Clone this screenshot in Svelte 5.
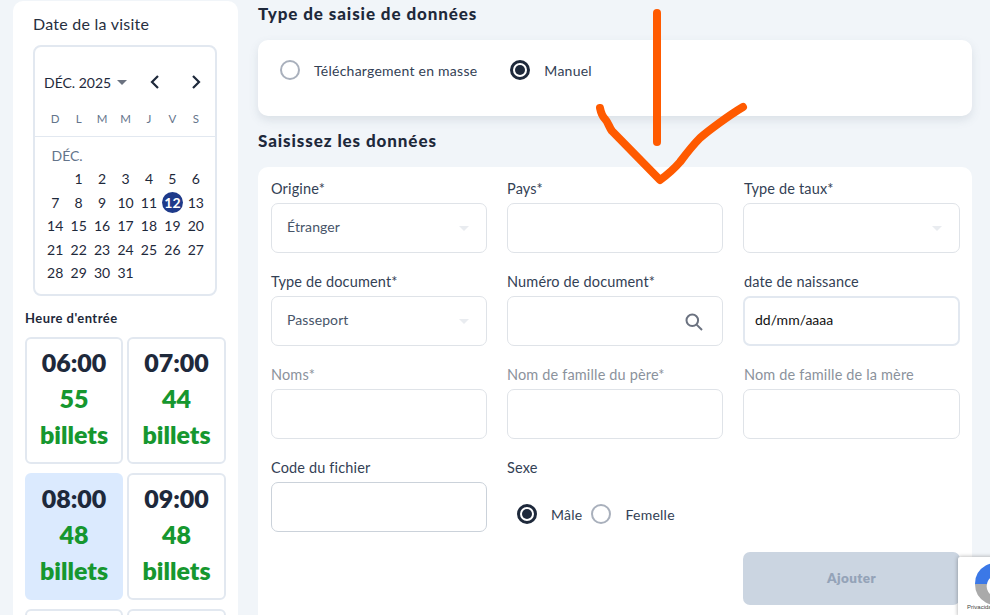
<script>
  const weekdays = ['D', 'L', 'M', 'M', 'J', 'V', 'S'];
  const days = ['', ...Array.from({ length: 31 }, (_, i) => i + 1)];
  const slots = [
    { time: '06:00', count: 55 },
    { time: '07:00', count: 44 },
    { time: '08:00', count: 48, active: true },
    { time: '09:00', count: 48 }
  ];
</script>

<div class="page">
  <aside class="side">
    <h3 class="side-title">Date de la visite</h3>
    <div class="cal">
      <div class="cal-head">
        <span class="month">DÉC. 2025</span>
        <span class="caret"></span>
        <svg class="nav prev" width="12" height="16" viewBox="0 0 12 16"><path d="M9 2 3 8l6 6" /></svg>
        <svg class="nav next" width="12" height="16" viewBox="0 0 12 16"><path d="m3 2 6 6-6 6" /></svg>
      </div>
      <div class="week">
        {#each weekdays as w}<span>{w}</span>{/each}
      </div>
      <div class="cal-body">
        <div class="cal-month">DÉC.</div>
        <div class="days">
          {#each days as d}
            <span class:today={d === 12}>{d}</span>
          {/each}
        </div>
      </div>
    </div>
    <h4 class="hour-title">Heure d'entrée</h4>
    <div class="slots">
      {#each slots as s}
        <div class="slot" class:active={s.active}>
          <div class="time">{s.time}</div>
          <div class="count">{s.count}<br />billets</div>
        </div>
      {/each}
      <div class="slot"></div>
      <div class="slot"></div>
    </div>
  </aside>

  <main class="main">
    <h2 class="head first">Type de saisie de données</h2>
    <section class="card type">
      <label class="radio"><span class="dot"></span>Téléchargement en masse</label>
      <label class="radio"><span class="dot on"></span>Manuel</label>
    </section>
    <h2 class="head second">Saisissez les données</h2>
    <section class="card form">
      <div class="grid">
        <div class="field">
          <span class="lab">Origine*</span>
          <div class="input select"><span class="val">Étranger</span><span class="tri"></span></div>
        </div>
        <div class="field">
          <span class="lab">Pays*</span>
          <div class="input"></div>
        </div>
        <div class="field">
          <span class="lab">Type de taux*</span>
          <div class="input select"><span class="tri"></span></div>
        </div>

        <div class="field">
          <span class="lab">Type de document*</span>
          <div class="input select"><span class="val">Passeport</span><span class="tri"></span></div>
        </div>
        <div class="field">
          <span class="lab">Numéro de document*</span>
          <div class="input search">
            <svg width="20" height="20" viewBox="0 0 20 20"><circle cx="8.3" cy="8.3" r="5.8" /><path d="m12.6 12.6 5.4 5.4" /></svg>
          </div>
        </div>
        <div class="field">
          <span class="lab">date de naissance</span>
          <div class="input date"><span class="date-val">dd/mm/aaaa</span></div>
        </div>

        <div class="field">
          <span class="lab muted">Noms*</span>
          <div class="input"></div>
        </div>
        <div class="field">
          <span class="lab muted">Nom de famille du père*</span>
          <div class="input"></div>
        </div>
        <div class="field">
          <span class="lab muted">Nom de famille de la mère</span>
          <div class="input"></div>
        </div>

        <div class="field">
          <span class="lab">Code du fichier</span>
          <div class="input strong"></div>
        </div>
        <div class="field">
          <span class="lab">Sexe</span>
          <div class="sex">
            <label class="radio"><span class="dot on"></span>Mâle</label>
            <label class="radio"><span class="dot"></span>Femelle</label>
          </div>
        </div>
      </div>
      <div class="actions"><button class="add">Ajouter</button></div>
    </section>
  </main>

  <svg class="arrow" width="990" height="200" viewBox="0 0 990 200">
    <path d="M657 13V142" />
    <path d="M600 108c1 5 2 8 5 11s4 8 7 12l48 49c7-5 14-11 20-18 6-8 12-16 20-24 8-7 28-22 43-31" />
  </svg>

  <div class="recaptcha">
    <svg width="32" height="42" viewBox="0 0 32 42">
      <path class="rb" d="M0 21 A21 21 0 0 1 32 3 V21 H21 L25 14 A9 9 0 0 0 12 21 H0 Z" />
      <path class="rg" d="M0 21 H12 A9 9 0 0 0 32 26 V39 A21 21 0 0 1 0 21 Z" />
    </svg>
    <span class="priv">Privacidad</span>
  </div>
</div>

<style>
  :global(body) { margin: 0; background: #f1f5f9; }
  .page {
    position: relative;
    width: 990px;
    height: 615px;
    overflow: hidden;
    display: flex;
    align-items: flex-start;
    background: #f1f5f9;
    font-family: Lato, "Open Sans", sans-serif;
    color: #1e293b;
  }
  .side {
    width: 225px;
    height: 700px;
    margin: 1px 0 0 13px;
    padding: 13px 12px 0;
    box-sizing: border-box;
    background: #fff;
    border-radius: 10px 10px 0 0;
    flex: none;
  }
  .side-title {
    margin: 0 0 11px 8px;
    font: 400 16px/20px Lato, sans-serif;
    letter-spacing: .25px;
    color: #27303f;
  }
  .cal {
    margin-left: 8px;
    width: 184px;
    height: 251px;
    box-sizing: border-box;
    border: 2px solid #e2e8f0;
    border-radius: 8px;
  }
  .cal-head {
    position: relative;
    height: 24px;
    margin-top: 23px;
    padding-left: 9px;
    display: flex;
    align-items: center;
  }
  .month { font-size: 14px; color: #1e293b; }
  .caret {
    margin-left: 6px;
    border: 5px solid transparent;
    border-top: 5px solid #6b7280;
    border-bottom: 0;
  }
  .nav { position: absolute; top: 4px; fill: none; stroke: #1e293b; stroke-width: 2.2; }
  .prev { left: 114px; }
  .next { left: 155px; }
  .week {
    display: grid;
    grid-template-columns: repeat(7, 23.45px);
    padding: 11px 8.5px 0;
    height: 29px;
    box-sizing: border-box;
    margin-top: 14px;
    border-bottom: 1px solid #e2e8f0;
    text-align: center;
    font-size: 11.5px;
    color: #64748b;
    align-items: start;
    line-height: 0;
  }
  .cal-body { padding: 10px 8.5px 0; }
  .cal-month { font-size: 14px; line-height: 17px; color: #64748b; padding-left: 8px; }
  .days {
    display: grid;
    grid-template-columns: repeat(7, 23.45px);
    grid-auto-rows: 23.5px;
    margin-top: 3px;
    text-align: center;
    font-size: 14px;
    line-height: 23.5px;
    color: #1e293b;
  }
  .days .today {
    justify-self: center;
    width: 21px;
    height: 21px;
    margin-top: 1px;
    line-height: 21px;
    border-radius: 50%;
    background: #1e3a8a;
    color: #fff;
    font-weight: 700;
  }
  .hour-title {
    margin: 14px 0 11px;
    font: 700 13px/16px Lato, sans-serif;
    letter-spacing: .45px;
    color: #1e293b;
  }
  .slots { display: grid; grid-template-columns: 98px 99px; gap: 9px 4px; }
  .slot {
    height: 127px;
    box-sizing: border-box;
    border: 2px solid #e2e8f0;
    border-radius: 6px;
    text-align: center;
    padding-top: 5px;
    font-weight: 800;
    font-size: 25px;
    line-height: 36px;
  }
  .slot.active { background: #dbeafe; border-color: #dbeafe; }
  .time { color: #1e293b; }
  .count { color: #16972f; }
  .main { width: 714px; margin-left: 20px; flex: none; }
  .head {
    margin: 0;
    font: 900 17px/20px Lato, sans-serif;
    letter-spacing: .9px;
    color: #1e293b;
  }
  .first { margin-top: 4px; }
  .second { margin-top: 15px; }
  .card { background: #fff; border-radius: 10px; }
  .type {
    margin-top: 16px;
    height: 76px;
    padding: 0 0 16px 22px;
    box-sizing: border-box;
    display: flex;
    align-items: center;
    gap: 33px;
    box-shadow: 0 4px 10px rgba(100, 116, 139, .16);
  }
  .radio {
    display: flex;
    align-items: center;
    gap: 14px;
    font-size: 14px;
    letter-spacing: .25px;
    color: #334155;
  }
  .dot {
    width: 20px;
    height: 20px;
    box-sizing: border-box;
    border: 2px solid #a9b0bc;
    border-radius: 50%;
    position: relative;
  }
  .dot.on { border: 3px solid #1e293b; }
  .dot.on::after {
    content: "";
    position: absolute;
    inset: 2px;
    background: #1e293b;
    border-radius: 50%;
  }
  .form { margin-top: 16px; height: 520px; padding: 13px 0 0 13px; box-sizing: border-box; }
  .grid {
    display: grid;
    grid-template-columns: 216px 216px 217px;
    column-gap: 20px;
    row-gap: 20px;
  }
  .lab {
    display: block;
    height: 18px;
    margin-bottom: 5px;
    font-size: 14.5px;
    line-height: 18px;
    letter-spacing: .15px;
    color: #334155;
  }
  .field:nth-child(3n) .lab { padding-left: 1px; }
  .lab.muted { color: #8b929c; }
  .input {
    height: 50px;
    box-sizing: border-box;
    border: 1px solid #dfe3e8;
    border-radius: 7px;
    display: flex;
    align-items: center;
    position: relative;
    background: #fff;
  }
  .input.strong { border-color: #cbd2da; }
  .val { padding: 0 0 3px 15px; font-size: 14px; letter-spacing: .1px; color: #475569; }
  .tri {
    position: absolute;
    right: 17px;
    top: 22px;
    border: 5px solid transparent;
    border-top: 5px solid #e9ecf0;
    border-bottom: 0;
  }
  .search svg {
    position: absolute;
    right: 18px;
    top: 15px;
    fill: none;
    stroke: #6b7280;
    stroke-width: 2;
  }
  .date { border: 2px solid #e2e8f0; padding: 0 0 3px 10px; }
  .date-val { font-size: 14px; color: #111; }
  .sex { display: flex; height: 50px; align-items: center; padding: 14px 0 0 10px; gap: 9px; box-sizing: border-box; }
  .actions { display: flex; justify-content: flex-start; margin: 20px 0 0 472px; }
  .add {
    width: 217px;
    height: 53px;
    flex: none;
    border: 0;
    border-radius: 7px;
    background: #cbd5e1;
    color: #94a3b8;
    font: 800 13.5px Lato, sans-serif;
    letter-spacing: .4px;
    padding-bottom: 2px;
  }
  .arrow { position: absolute; left: 0; top: 0; fill: none; stroke: #ff5a00; stroke-linecap: round; stroke-linejoin: round; stroke-width: 8; pointer-events: none; }
  .recaptcha {
    position: absolute;
    left: 958px;
    top: 557px;
    width: 40px;
    height: 60px;
    background: #fff;
    border-radius: 2px;
    box-shadow: 0 0 4px rgba(0, 0, 0, .35);
    overflow: hidden;
  }
  .recaptcha svg { position: absolute; left: 17px; top: 6px; }
  .rb { fill: #3b78e7; }
  .rg { fill: #aaa; }
  .priv { position: absolute; left: 9px; top: 47px; font: 6px "Liberation Sans", sans-serif; color: #444; white-space: nowrap; }
</style>
